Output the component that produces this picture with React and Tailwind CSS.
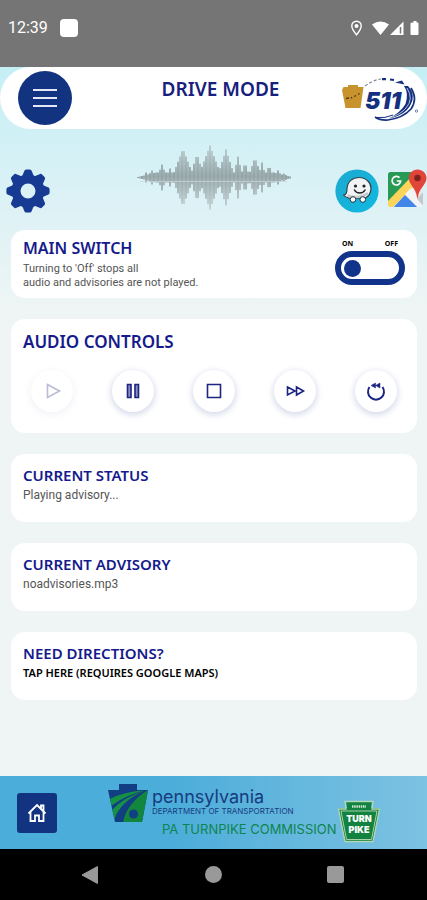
import { useState } from "react";

// [x, half height, half width] of every spike in the sound wave
const SPIKES = [
  [8, 5, 3],
  [14, 7, 5],
  [24, 13, 5],
  [32, 9, 4],
  [45, 29, 11],
  [59, 24, 7],
  [72, 32, 12],
  [88, 28, 9],
  [100, 21, 5],
  [107, 15, 5],
  [117, 20, 7],
  [124, 15, 4],
  [131, 12, 5],
  [140, 7, 5],
  [146, 4, 5],
];

const WAVE = Array.from({ length: 77 }, (_, i) => {
  const x = i * 2;
  const edge = Math.min(x, 154 - x);
  const base = Math.min(5, edge / 4 + 0.5);
  const top = SPIKES.map(([sx, h, w]) => h * (1 - Math.abs(x - sx) / w));
  return { x, h: Math.max(base, ...top) };
});

function SoundWave() {
  return (
    <svg width="154" height="66" viewBox="0 0 154 66" aria-hidden="true">
      <defs>
        <linearGradient id="wave" x1="0" y1="0" x2="0" y2="66" gradientUnits="userSpaceOnUse">
          <stop offset="0" stopColor="#bccfd2" />
          <stop offset="0.480" stopColor="#93a3a6" />
          <stop offset="0.520" stopColor="#9caaad" />
          <stop offset="1" stopColor="#c6d6d9" />
        </linearGradient>
      </defs>
      {WAVE.map(({ x, h }, i) => (
        <rect
          key={x}
          x={x}
          y={32.5 - h}
          width="2"
          height={h * 2}
          fill="url(#wave)"
          opacity={i % 2 ? 0.88 : 1}
        />
      ))}
      <path d="M3 36.500H150" stroke="#c9d8da" strokeWidth="0.700" />
    </svg>
  );
}

function GearIcon() {
  return (
    <svg width="44" height="44" viewBox="0 0 44 44" aria-hidden="true">
      <g fill="#173a93">
        {[0, 45, 90, 135, 180, 225, 270, 315].map((a) => (
          <path
            key={a}
            d="M15 10L18.3 2Q18.7 .4 20.2 .4H23.8Q25.3 .4 25.7 2L29 10Z"
            transform={`rotate(${a} 22 22)`}
          />
        ))}
      </g>
      <circle cx="22" cy="22" r="12" fill="none" stroke="#173a93" strokeWidth="9" />
    </svg>
  );
}

function WazeIcon() {
  return (
    <svg width="44" height="44" viewBox="0 0 44 44" aria-hidden="true">
      <defs>
        <linearGradient id="waze" x1="0" y1="0" x2="1" y2="1">
          <stop offset="0" stopColor="#1da9cf" />
          <stop offset="1" stopColor="#10b9e2" />
        </linearGradient>
      </defs>
      <circle cx="22" cy="22" r="21.6" fill="url(#waze)" />
      <path
        d="M8.500 26C11.500 26 12 23.500 12 19.500C12.500 12.500 17.500 8.500 24 8.500C31 8.500 36 13.500 36 19C36 24 33.500 27.500 30 29.200H14C11.500 28.700 9.500 27.500 8.500 26Z"
        fill="#f1f3f4"
        stroke="#32434a"
        strokeWidth="1.200"
        strokeLinejoin="round"
      />
      <path d="M12.500 26.500C18 29 28 28.500 33 24" stroke="#c5cccf" strokeWidth="2.500" fill="none" />
      <circle cx="20.500" cy="17" r="1.600" fill="#222" />
      <circle cx="29" cy="17" r="1.600" fill="#222" />
      <path d="M19.500 21C21.500 25 28 25 30 21" stroke="#222" strokeWidth="1.500" fill="none" strokeLinecap="round" />
      <circle cx="18" cy="30.500" r="2.800" fill="#fff" stroke="#26343a" strokeWidth="1" />
      <circle cx="27.800" cy="30.500" r="2.800" fill="#fff" stroke="#26343a" strokeWidth="1" />
    </svg>
  );
}

function MapsIcon() {
  return (
    <svg width="40" height="40" viewBox="0 0 40 40" aria-hidden="true">
      <defs>
        <clipPath id="mapsheet">
          <rect x="1" y="3" width="35" height="35" rx="2.500" />
        </clipPath>
      </defs>
      <g clipPath="url(#mapsheet)">
        <rect width="40" height="40" fill="#e7e9ea" />
        <path d="M0 2H31L0 34Z" fill="#279a55" />
        <path d="M0 33L24 8L30 14L4 40H0Z" fill="#fbd45c" />
        <path d="M5 40L18 26L32 40Z" fill="#4285e8" />
        <path d="M18 25L24 19L38 35V40H33Z" fill="#f2f3f4" />
        <path d="M30 30L37 22V38Z" fill="#c6c9cb" />
      </g>
      <path d="M12.500 8.700A4.300 4.300 0 1 0 13.700 12H9.800" fill="none" stroke="#fff" strokeWidth="1.700" />
      <path
        d="M30.500 0.500C25.500 0.500 21.800 4.300 21.800 9C21.800 16 29 18.500 30 28.500Q30.500 30 31 28.500C32 18.500 39.500 16 39.500 9C39.500 4.300 35.500 0.500 30.500 0.500Z"
        fill="#e1453a"
      />
      <circle cx="30.500" cy="9" r="3.200" fill="#7c221c" />
    </svg>
  );
}

function Logo511() {
  return (
    <svg width="78" height="52" viewBox="0 -6 78 52" role="img" aria-label="511">
      <path
        d="M2.500 9H7V7H17V9H22.500L19.500 30H4.500L1 12Q1.500 11 2.500 9Z"
        fill="#c8922d"
      />
      <path d="M5 20.500L8 20M10 19L11 20.500M13 18.500L15 17.500M17 16.500L18.500 15.500" stroke="#4d3a1d" strokeWidth="1.300" />
      <path d="M24 8Q32 2 40 1" fill="none" stroke="#7d8794" strokeWidth="1.200" strokeDasharray="3 2" />
      <path d="M41 1.200H45M49 1.500L53 2" stroke="#14307f" strokeWidth="2.200" />
      <path d="M54 4.500L61 2.500L63.500 6.500Z" fill="#14307f" />
      <path d="M63 8L67 8Q73 14 71.500 22Q67 37 48 40.500Q60 34 64.500 26Q68 15 63 8Z" fill="#14307f" />
      <path d="M70 10Q77 21 70 31Q62 40 47 42Q39 42.500 34 39" fill="none" stroke="#14307f" strokeWidth="1.700" />
      <path d="M52 37Q44 40.500 36 39.500" fill="none" stroke="#14307f" strokeWidth="1" />
      <path d="M66 10Q73 21 65 30Q60 36 50 39.500" fill="none" stroke="#fff" strokeWidth="0.700" />
      <text
        x="24"
        y="31"
        fontFamily="Inter, sans-serif"
        fontSize="23"
        fontWeight="900"
        fontStyle="italic"
        fill="#14307f"
      >
        511
      </text>
      <circle cx="75.500" cy="33" r="1.200" fill="none" stroke="#53659c" strokeWidth="0.800" />
    </svg>
  );
}

function StatusBar() {
  return (
    <div className="flex h-[67px] items-center justify-between bg-[#757575] px-2 pb-3 text-white">
      <div className="flex items-center gap-3">
        <span className="font-[Roboto,sans-serif] text-base">12:39</span>
        <span className="size-[18px] rounded-[4px] bg-white" />
      </div>
      <svg width="72" height="18" viewBox="0 0 72 18" fill="#fff" aria-hidden="true">
        <path
          d="M9.500 2.200A4.700 4.700 0 0 0 4.800 7C4.800 10.200 9.500 15.800 9.500 15.800S14.200 10.200 14.200 7A4.700 4.700 0 0 0 9.500 2.200Z"
          fill="none"
          stroke="#fff"
          strokeWidth="1.400"
        />
        <circle cx="9.500" cy="6.900" r="2" />
        <path d="M25 5.500Q33.500 -.5 42 5.500L33.500 16Z" />
        <path d="M43 16L56.500 2.500V16Z" />
        <path d="M53.500 8V14.500" stroke="#757575" strokeWidth="1.500" />
        <path d="M65.500 3.500H66.500V2H69.500V3.500H70.500Q71.500 3.500 71.500 4.500V15Q71.500 16 70.500 16H64.500Q63.500 16 63.500 15V4.500Q63.500 3.500 65.500 3.500Z" />
      </svg>
    </div>
  );
}

function Header() {
  return (
    <header className="flex h-[62px] items-center justify-between rounded-full bg-white pr-2 pl-[18px]">
      <button
        type="button"
        aria-label="Menu"
        className="flex size-[54px] flex-col items-center justify-center gap-[6px] rounded-full bg-[#12337f]"
      >
        <span className="h-[2px] w-6 bg-[#e4e7f5]" />
        <span className="h-[2px] w-6 bg-[#e4e7f5]" />
        <span className="h-[2px] w-6 bg-[#e4e7f5]" />
      </button>
      <h1 className="self-start pt-[10px] pl-7 text-[19px] leading-6 font-semibold text-[#17207c]">
        DRIVE MODE
      </h1>
      <Logo511 />
    </header>
  );
}

function Card({ title, className = "", children }) {
  return (
    <section className={`rounded-[14px] bg-white px-3 ${className}`}>
      <h2 className="leading-5 font-semibold text-[#151a8c]">{title}</h2>
      {children}
    </section>
  );
}

function RoundButton({ label, disabled, children }) {
  return (
    <button
      type="button"
      aria-label={label}
      disabled={disabled}
      className="flex size-[42px] items-center justify-center rounded-full bg-white shadow-[0_2px_6px_1px_#d6daea] disabled:opacity-30"
    >
      <svg
        width="22"
        height="22"
        viewBox="0 0 22 22"
        fill="none"
        stroke="#1c2580"
        strokeWidth="1.600"
        aria-hidden="true"
      >
        {children}
      </svg>
    </button>
  );
}

function MainSwitch() {
  const [on, setOn] = useState(true);

  return (
    <section className="flex items-start justify-between rounded-[14px] bg-white px-3 py-2">
      <div>
        <h2 className="text-base leading-5 font-semibold text-[#151a8c]">MAIN SWITCH</h2>
        <p className="pt-1 font-[Roboto,sans-serif] text-[11px] leading-[14px] text-[#555]">
          Turning to 'Off' stops all
          <br />
          audio and advisories are not played.
        </p>
      </div>
      <label className="flex flex-col">
        <span className="flex justify-between px-[7px] pb-[2px] text-[7px] leading-[11px] font-bold text-black">
          <span>ON</span>
          <span>OFF</span>
        </span>
        <input
          type="checkbox"
          aria-label="Main switch"
          checked={on}
          onChange={(e) => setOn(e.target.checked)}
          className="flex h-[34px] w-[70px] appearance-none items-center justify-end rounded-full border-[6px] border-[#12338a] px-[3px] before:size-[17px] before:rounded-full before:bg-[#12338a] before:content-[''] checked:justify-start"
        />
      </label>
    </section>
  );
}

function Footer() {
  return (
    <footer className="flex h-[73px] items-center bg-linear-to-r from-[#4badd9] from-40% to-[#7cc2e2] pl-[17px]">
      <button
        type="button"
        aria-label="Home"
        className="flex size-10 items-center justify-center rounded-[3px] bg-[#12337f]"
      >
        <svg width="22" height="22" viewBox="0 0 22 22" fill="none" stroke="#fff" strokeWidth="1.800" aria-hidden="true">
          <path d="M2.500 11.500L11 3L19.500 11.500M4.500 10V19H9V13.500H13V19H17.500V10M15 6.500V3.500H17.500V9" />
        </svg>
      </button>
      <div className="ml-[51px] flex items-end pb-[6px]">
        <div>
          <div className="flex gap-1">
            <svg width="40" height="39" viewBox="0 0 40 39" aria-hidden="true">
              <defs>
                <clipPath id="keystone">
                  <path d="M0 6H11V0H29V6H40L34 38H7Z" />
                </clipPath>
              </defs>
              <g clipPath="url(#keystone)">
                <rect width="40" height="39" fill="#123f83" />
                <path
                  d="M2 15Q14 8 36 6.500Q18 11 3 22ZM4 26Q16 13 36 7Q17 18 6 35Z"
                  fill="#159045"
                />
                <path d="M15 39Q18 19 40 6V39Z" fill="#12853f" />
                <path d="M8 31Q17 14 38 6.500Q19 20 13 39H7Z" fill="#123f83" />
                <circle cx="25.500" cy="30" r="4.500" fill="#123f83" />
              </g>
            </svg>
            <div className="font-[Inter,sans-serif] text-[#173b7f]">
              <p className="pt-[3px] text-[18px] leading-[20px]">pennsylvania</p>
              <p className="text-[8px] leading-[9px] whitespace-nowrap">DEPARTMENT OF TRANSPORTATION</p>
            </div>
          </div>
          <p className="pl-[54px] font-[Inter,sans-serif] text-[13px] leading-[12px] whitespace-nowrap text-[#0f8450]">
            PA TURNPIKE COMMISSION
          </p>
        </div>
        <svg width="44" height="43" viewBox="0 0 44 43" className="-mb-2" role="img" aria-label="Pennsylvania Turnpike">
          <path d="M9 1H35L34 8H43L36 42H8L1 8H10Z" fill="#11823f" />
          <path
            d="M8 1.500H36L35 9H42.500L36 41.500H8L1.500 9H9Z"
            fill="none"
            stroke="#b4d8b5"
            strokeWidth="1.300"
          />
          <path d="M4 11H40L34.500 39.500H9.500Z" fill="#11823f" stroke="#d2e5c9" strokeWidth="0.800" />
          <path d="M15 6.500H29" stroke="#cfe6d0" strokeWidth="2.500" strokeDasharray="1.500 .7" />
          <g fontFamily="Inter, sans-serif" fontSize="9" fontWeight="900" fill="#fff" textAnchor="middle">
            <text x="22" y="22">TURN</text>
            <text x="22" y="33">PIKE</text>
          </g>
        </svg>
      </div>
    </footer>
  );
}

function NavBar() {
  return (
    <nav className="grid h-[51px] grid-cols-[1fr_auto_1fr] items-center gap-[105px] bg-black">
      <button type="button" aria-label="Back" className="justify-self-end">
        <svg width="20" height="20" viewBox="0 0 20 20" aria-hidden="true">
          <path d="M2 10L17.500 1.500V18.500Z" fill="#999" stroke="#999" strokeLinejoin="round" />
        </svg>
      </button>
      <button type="button" aria-label="Home screen" className="size-[17px] rounded-full bg-[#999]" />
      <button type="button" aria-label="Recent apps" className="size-[17px] rounded-[2px] bg-[#999]" />
    </nav>
  );
}

export default function App() {
  return (
    <div className="flex min-h-screen flex-col bg-[#eef5f4] font-['Noto_Sans',sans-serif]">
      <StatusBar />

      <div className="flex flex-1 flex-col bg-[linear-gradient(to_bottom,#c5eff5_0px,#dff2f6_150px,#eef5f4_240px)]">
        <Header />

        {/* Settings, sound wave and map apps */}
        <div className="grid h-[101px] grid-cols-[1fr_auto_1fr]">
          <button type="button" aria-label="Settings" className="mt-10 ml-[6px] self-start justify-self-start">
            <GearIcon />
          </button>
          <div className="pt-4">
            <SoundWave />
          </div>
          <div className="mt-10 flex items-start gap-2 self-start justify-self-end">
            <button type="button" aria-label="Waze">
              <WazeIcon />
            </button>
            <button type="button" aria-label="Google Maps">
              <MapsIcon />
            </button>
          </div>
        </div>

        <main className="flex flex-1 flex-col gap-[21px] pr-[10px] pl-[11px]">
          <MainSwitch />

          <Card title="AUDIO CONTROLS" className="pt-[13px] pb-[21px] text-[17px]">
            <div className="flex justify-between px-2 pt-[18px]">
              <RoundButton label="Play" disabled>
                <path d="M6.500 4.500L18.500 11L6.500 17.500Z" />
              </RoundButton>
              <RoundButton label="Pause">
                <path d="M5.500 4.500H9V17.500H5.500ZM13 4.500H16.500V17.500H13Z" fill="#8990bd" />
              </RoundButton>
              <RoundButton label="Stop">
                <path d="M4.500 4.500H17.500V17.500H4.500Z" />
              </RoundButton>
              <RoundButton label="Skip">
                <path d="M3.500 7L11 11L3.500 15ZM12.500 7L19.500 11L12.500 15Z" />
              </RoundButton>
              <RoundButton label="Replay">
                <path d="M4.500 7A8 8 0 1 0 17.500 7" strokeWidth="2" />
                <path d="M10.500 3L6 5.500L10.500 8ZM15 3L10.500 5.500L15 8Z" fill="#1c2580" strokeWidth="0.500" />
              </RoundButton>
            </div>
          </Card>

          <Card title="CURRENT STATUS" className="pt-[11px] pb-[17px] text-[15px]">
            <p className="font-[Roboto,sans-serif] text-[12px] leading-5 text-[#555]">Playing advisory...</p>
          </Card>

          <Card title="CURRENT ADVISORY" className="pt-[11px] pb-[17px] text-[15px]">
            <p className="font-[Roboto,sans-serif] text-[12px] leading-5 text-[#555]">noadvisories.mp3</p>
          </Card>

          <Card title="NEED DIRECTIONS?" className="pt-[11px] pb-[17px] text-[15px]">
            <a href="#directions" className="block text-[11px] leading-5 font-semibold text-black">
              TAP HERE (REQUIRES GOOGLE MAPS)
            </a>
          </Card>
        </main>
      </div>

      <Footer />
      <NavBar />
    </div>
  );
}
